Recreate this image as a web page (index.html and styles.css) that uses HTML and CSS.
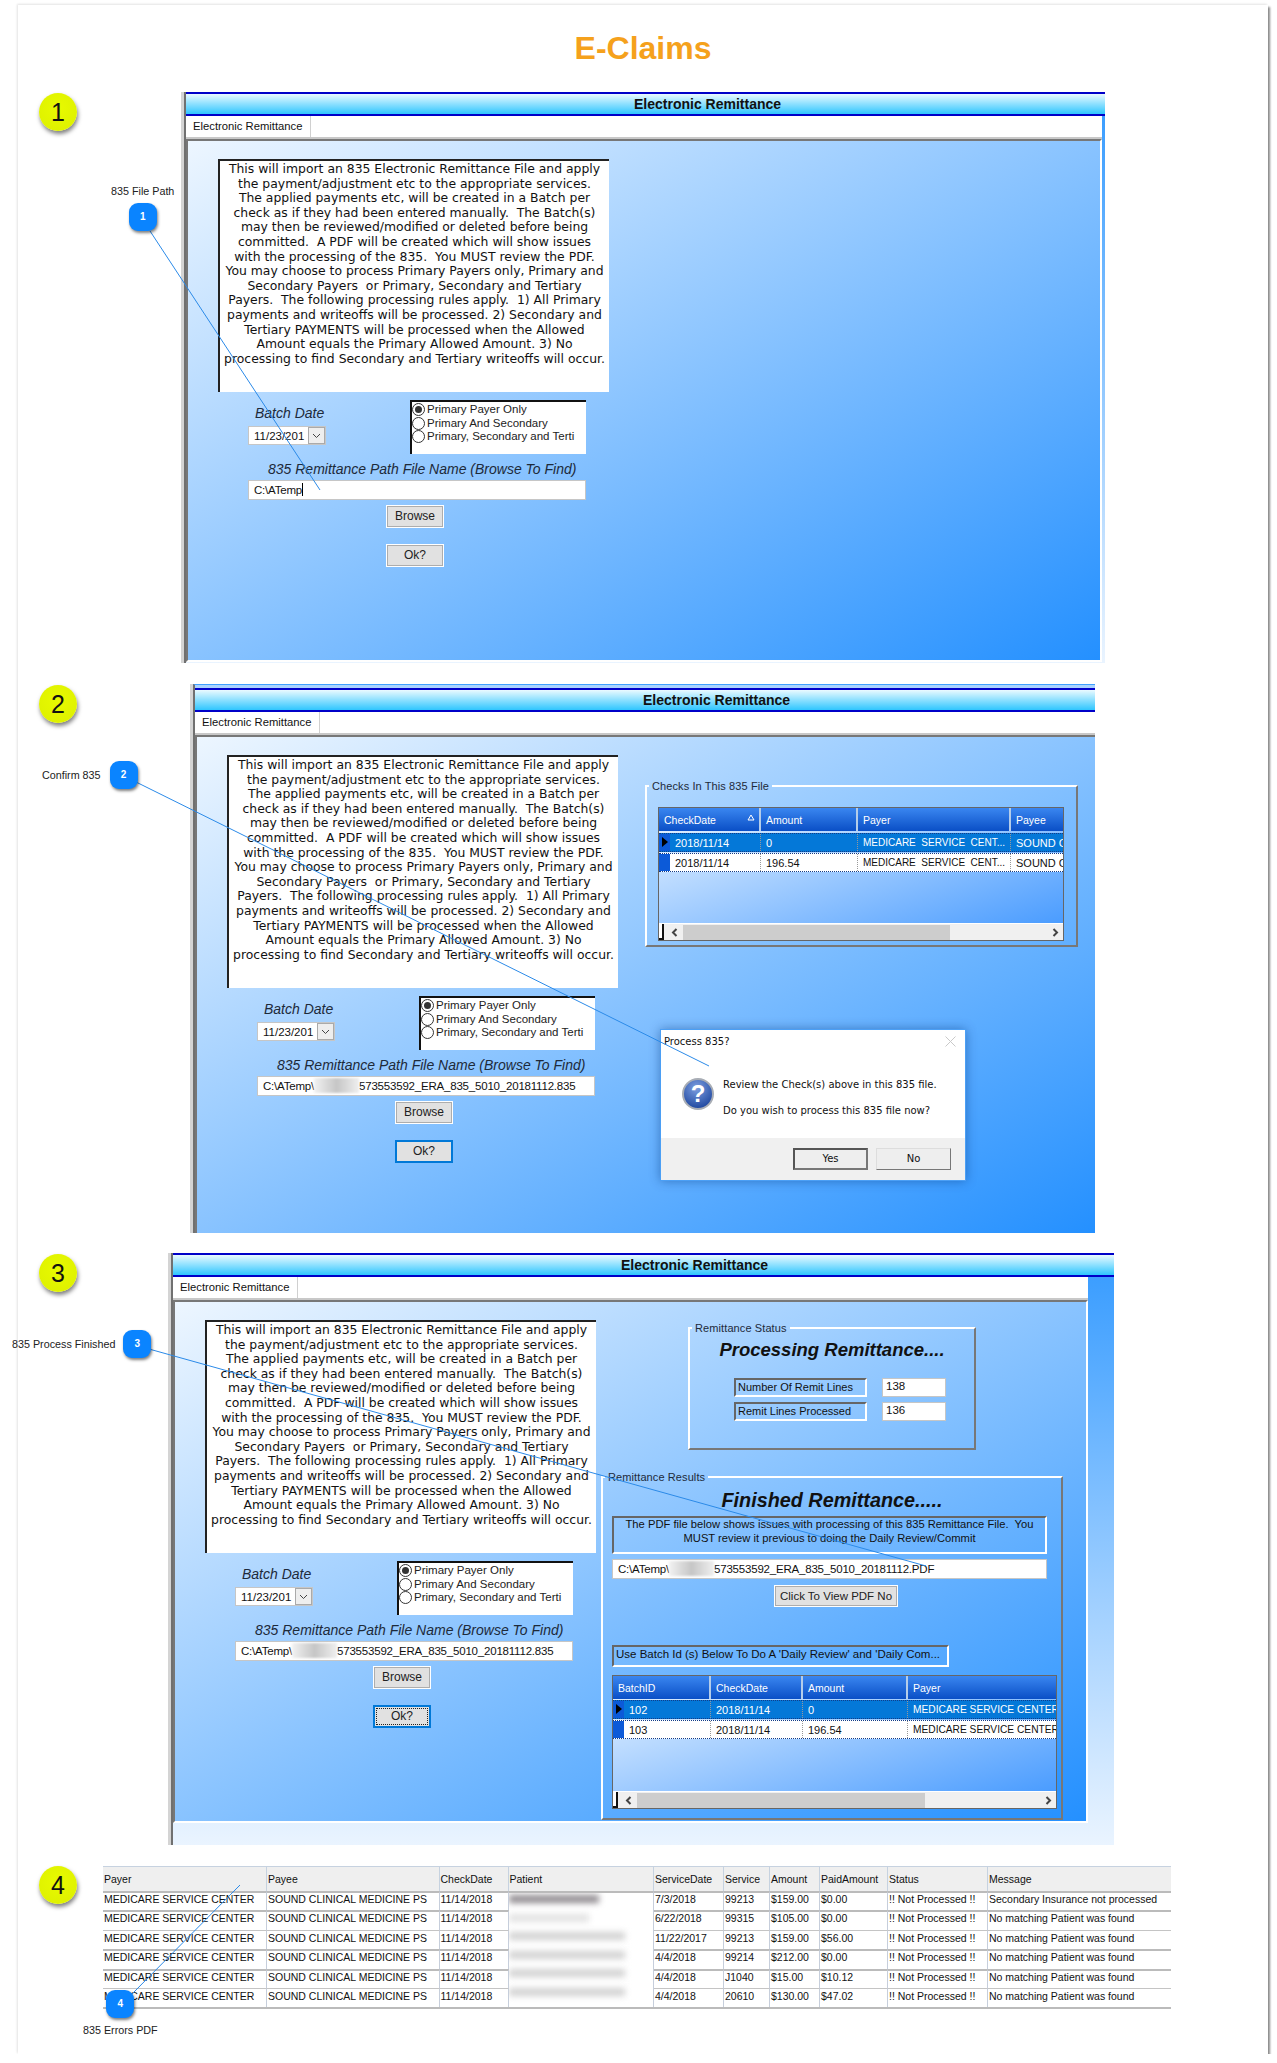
FILE: index.html
```html
<!DOCTYPE html>
<html lang="en">
<head>
  <meta charset="UTF-8" />
  <title>E-Claims</title>
  <link rel="stylesheet" href="styles.css">
</head>
<body>

<div class="card">
  <h1>E-Claims</h1>

  <!-- Step 1 -->
  <section class="step step-1">
    <div class="marker">1</div>
    <div class="win">
      <div class="win-title">Electronic Remittance</div>
      <div class="win-body">
        <div class="tabs"><span class="tab">Electronic Remittance</span></div>
        <div class="panel">
          <div class="form">
<div class="notice">This will import an 835 Electronic Remittance File and apply
the payment/adjustment etc to the appropriate services.
The applied payments etc, will be created in a Batch per
check as if they had been entered manually.  The Batch(s)
may then be reviewed/modified or deleted before being
committed.  A PDF will be created which will show issues
with the processing of the 835.  You MUST review the PDF.
You may choose to process Primary Payers only, Primary and
Secondary Payers  or Primary, Secondary and Tertiary
Payers.  The following processing rules apply.  1) All Primary
payments and writeoffs will be processed. 2) Secondary and
Tertiary PAYMENTS will be processed when the Allowed
Amount equals the Primary Allowed Amount. 3) No
processing to find Secondary and Tertiary writeoffs will occur.</div>
            <div class="form-lower">
              <div class="date-row">
                <div class="date-block">
                  <div class="date-label">Batch Date</div>
                  <div class="date-field">11/23/201<span class="drop"><svg width="9" height="6" viewBox="0 0 9 6"><path d="M1 1l3.5 3.5L8 1" fill="none" stroke="#444"/></svg></span></div>
                </div>
                <div class="radios">
                  <div class="radio on">Primary Payer Only</div>
                  <div class="radio">Primary And Secondary</div>
                  <div class="radio">Primary, Secondary and Terti</div>
                </div>
              </div>
              <div class="path-label">835 Remittance Path File Name (Browse To Find)</div>
              <div class="text-field">C:\ATemp<span class="caret"></span></div>
              <div class="btn">Browse</div>
              <div class="btn btn-ok">Ok?</div>
            </div>
          </div>
        </div>
      </div>
    </div>
    <div class="callout callout-col">
      <span class="callout-label">835 File Path</span>
      <span class="pin">1</span>
    </div>
  </section>

  <!-- Step 2 -->
  <section class="step step-2">
    <div class="marker">2</div>
    <div class="win">
      <div class="win-title">Electronic Remittance</div>
      <div class="win-body">
        <div class="tabs"><span class="tab">Electronic Remittance</span></div>
        <div class="panel">
          <div class="form">
<div class="notice">This will import an 835 Electronic Remittance File and apply
the payment/adjustment etc to the appropriate services.
The applied payments etc, will be created in a Batch per
check as if they had been entered manually.  The Batch(s)
may then be reviewed/modified or deleted before being
committed.  A PDF will be created which will show issues
with the processing of the 835.  You MUST review the PDF.
You may choose to process Primary Payers only, Primary and
Secondary Payers  or Primary, Secondary and Tertiary
Payers.  The following processing rules apply.  1) All Primary
payments and writeoffs will be processed. 2) Secondary and
Tertiary PAYMENTS will be processed when the Allowed
Amount equals the Primary Allowed Amount. 3) No
processing to find Secondary and Tertiary writeoffs will occur.</div>
            <div class="form-lower">
              <div class="date-row">
                <div class="date-block">
                  <div class="date-label">Batch Date</div>
                  <div class="date-field">11/23/201<span class="drop"><svg width="9" height="6" viewBox="0 0 9 6"><path d="M1 1l3.5 3.5L8 1" fill="none" stroke="#444"/></svg></span></div>
                </div>
                <div class="radios">
                  <div class="radio on">Primary Payer Only</div>
                  <div class="radio">Primary And Secondary</div>
                  <div class="radio">Primary, Secondary and Terti</div>
                </div>
              </div>
              <div class="path-label">835 Remittance Path File Name (Browse To Find)</div>
              <div class="text-field">C:\ATemp\<span class="smudge"></span>573553592_ERA_835_5010_20181112.835</div>
              <div class="btn">Browse</div>
              <div class="btn btn-ok btn-focus">Ok?</div>
            </div>
          </div>
          <div class="side">
            <fieldset class="group group-checks">
              <legend>Checks In This 835 File</legend>
              <div class="grid grid-checks">
                <div class="grid-row grid-head">
                  <span>CheckDate<svg class="sort" width="8" height="7" viewBox="0 0 8 7"><path d="M4 1L7 6H1z" fill="none" stroke="#fff"/></svg></span><span>Amount</span><span>Payer</span><span>Payee</span>
                </div>
                <div class="grid-row grid-sel">
                  <span><i class="mark mark-cur"></i>2018/11/14</span><span>0</span><span class="cut">MEDICARE  SERVICE  CENT...</span><span>SOUND C</span>
                </div>
                <div class="grid-row">
                  <span><i class="mark"></i>2018/11/14</span><span>196.54</span><span class="cut">MEDICARE  SERVICE  CENT...</span><span>SOUND C</span>
                </div>
                <div class="scroll">
                  <span class="sb-corner"></span>
                  <svg class="sb-arrow" width="7" height="9" viewBox="0 0 7 9"><path d="M5.5 1L2 4.5 5.5 8" fill="none" stroke="#444" stroke-width="2"/></svg>
                  <span class="sb-track"><span class="sb-thumb"></span></span>
                  <svg class="sb-arrow" width="7" height="9" viewBox="0 0 7 9"><path d="M1.5 1L5 4.5 1.5 8" fill="none" stroke="#444" stroke-width="2"/></svg>
                </div>
              </div>
            </fieldset>
          </div>
        </div>
      </div>
      <div class="dialog">
        <div class="dialog-head">Process 835?<svg class="dialog-x" width="11" height="11" viewBox="0 0 11 11"><path d="M.5.5l10 10M10.5.5l-10 10" stroke="#c9c9c9"/></svg></div>
        <div class="dialog-main">
          <svg class="dialog-icon" width="32" height="32" viewBox="0 0 32 32">
            <defs>
              <radialGradient id="qBlue" cx="45%" cy="30%" r="75%">
                <stop offset="0" stop-color="#7d9fe0"/>
                <stop offset="1" stop-color="#17409a"/>
              </radialGradient>
            </defs>
            <circle cx="16" cy="16" r="15" fill="url(#qBlue)" stroke="#a8adb5" stroke-width="2"/>
            <text x="16" y="24" text-anchor="middle" class="dialog-q">?</text>
          </svg>
          <div class="dialog-text">
            <p>Review the Check(s) above in this 835 file.</p>
            <p>Do you wish to process this 835 file now?</p>
          </div>
        </div>
        <div class="dialog-foot">
          <span class="dialog-btn dialog-btn-default">Yes</span>
          <span class="dialog-btn">No</span>
        </div>
      </div>
    </div>
    <div class="callout">
      <span class="callout-label">Confirm 835</span>
      <span class="pin">2</span>
    </div>
  </section>

  <!-- Step 3 -->
  <section class="step step-3">
    <div class="marker">3</div>
    <div class="win">
      <div class="win-title">Electronic Remittance</div>
      <div class="win-body">
        <div class="tabs"><span class="tab">Electronic Remittance</span></div>
        <div class="panel">
          <div class="form">
<div class="notice">This will import an 835 Electronic Remittance File and apply
the payment/adjustment etc to the appropriate services.
The applied payments etc, will be created in a Batch per
check as if they had been entered manually.  The Batch(s)
may then be reviewed/modified or deleted before being
committed.  A PDF will be created which will show issues
with the processing of the 835.  You MUST review the PDF.
You may choose to process Primary Payers only, Primary and
Secondary Payers  or Primary, Secondary and Tertiary
Payers.  The following processing rules apply.  1) All Primary
payments and writeoffs will be processed. 2) Secondary and
Tertiary PAYMENTS will be processed when the Allowed
Amount equals the Primary Allowed Amount. 3) No
processing to find Secondary and Tertiary writeoffs will occur.</div>
            <div class="form-lower">
              <div class="date-row">
                <div class="date-block">
                  <div class="date-label">Batch Date</div>
                  <div class="date-field">11/23/201<span class="drop"><svg width="9" height="6" viewBox="0 0 9 6"><path d="M1 1l3.5 3.5L8 1" fill="none" stroke="#444"/></svg></span></div>
                </div>
                <div class="radios">
                  <div class="radio on">Primary Payer Only</div>
                  <div class="radio">Primary And Secondary</div>
                  <div class="radio">Primary, Secondary and Terti</div>
                </div>
              </div>
              <div class="path-label">835 Remittance Path File Name (Browse To Find)</div>
              <div class="text-field">C:\ATemp\<span class="smudge"></span>573553592_ERA_835_5010_20181112.835</div>
              <div class="btn">Browse</div>
              <div class="btn btn-ok btn-focus"><span class="btn-dots">Ok?</span></div>
            </div>
          </div>
          <div class="side">
            <fieldset class="group group-status">
              <legend>Remittance Status</legend>
              <div class="big-title">Processing Remittance....</div>
              <div class="stat-row"><span class="sunken stat-label">Number Of Remit Lines</span><span class="stat-value">138</span></div>
              <div class="stat-row"><span class="sunken stat-label">Remit Lines Processed</span><span class="stat-value">136</span></div>
            </fieldset>
            <fieldset class="group group-results">
              <legend>Remittance Results</legend>
              <div class="big-title">Finished Remittance.....</div>
              <div class="sunken results-note">The PDF file below shows issues with processing of this 835 Remittance File.  You
MUST review it previous to doing the Daily Review/Commit</div>
              <div class="text-field results-path">C:\ATemp\<span class="smudge"></span>573553592_ERA_835_5010_20181112.PDF</div>
              <div class="btn btn-view">Click To View PDF No</div>
              <div class="sunken results-use">Use Batch Id (s) Below To Do A 'Daily Review' and 'Daily Com...</div>
              <div class="grid grid-batches">
                <div class="grid-row grid-head">
                  <span>BatchID</span><span>CheckDate</span><span>Amount</span><span>Payer</span>
                </div>
                <div class="grid-row grid-sel">
                  <span><i class="mark mark-cur"></i>102</span><span>2018/11/14</span><span>0</span><span class="cut">MEDICARE SERVICE CENTER</span>
                </div>
                <div class="grid-row">
                  <span><i class="mark"></i>103</span><span>2018/11/14</span><span>196.54</span><span class="cut">MEDICARE SERVICE CENTER</span>
                </div>
                <div class="scroll">
                  <span class="sb-corner"></span>
                  <svg class="sb-arrow" width="7" height="9" viewBox="0 0 7 9"><path d="M5.5 1L2 4.5 5.5 8" fill="none" stroke="#444" stroke-width="2"/></svg>
                  <span class="sb-track"><span class="sb-thumb"></span></span>
                  <svg class="sb-arrow" width="7" height="9" viewBox="0 0 7 9"><path d="M1.5 1L5 4.5 1.5 8" fill="none" stroke="#444" stroke-width="2"/></svg>
                </div>
              </div>
            </fieldset>
          </div>
        </div>
      </div>
    </div>
    <div class="callout">
      <span class="callout-label">835 Process Finished</span>
      <span class="pin">3</span>
    </div>
  </section>

  <!-- Step 4 -->
  <section class="step step-4">
    <div class="marker">4</div>
    <table class="errors">
      <colgroup>
        <col class="c-payer"><col class="c-payee"><col class="c-date"><col class="c-patient"><col class="c-svcdate"><col class="c-svc"><col class="c-amt"><col class="c-paid"><col class="c-status"><col class="c-msg">
      </colgroup>
      <thead>
        <tr><th>Payer</th><th>Payee</th><th>CheckDate</th><th>Patient</th><th>ServiceDate</th><th>Service</th><th>Amount</th><th>PaidAmount</th><th>Status</th><th>Message</th></tr>
      </thead>
      <tbody>
        <tr class="thick">
          <td>MEDICARE SERVICE CENTER</td><td>SOUND CLINICAL MEDICINE PS</td><td>11/14/2018</td>
          <td rowspan="6" class="patient">
            <div class="smear smear-dark"></div>
            <div class="smear smear-short"></div>
            <div class="smear"></div>
            <div class="smear"></div>
            <div class="smear"></div>
            <div class="smear"></div>
          </td>
          <td>7/3/2018</td><td>99213</td><td>$159.00</td><td>$0.00</td><td>!! Not Processed !!</td><td>Secondary Insurance not processed</td>
        </tr>
        <tr class="thick">
          <td>MEDICARE SERVICE CENTER</td><td>SOUND CLINICAL MEDICINE PS</td><td>11/14/2018</td>
          <td>6/22/2018</td><td>99315</td><td>$105.00</td><td>$0.00</td><td>!! Not Processed !!</td><td>No matching Patient was found</td>
        </tr>
        <tr>
          <td>MEDICARE SERVICE CENTER</td><td>SOUND CLINICAL MEDICINE PS</td><td>11/14/2018</td>
          <td>11/22/2017</td><td>99213</td><td>$159.00</td><td>$56.00</td><td>!! Not Processed !!</td><td>No matching Patient was found</td>
        </tr>
        <tr class="thick">
          <td>MEDICARE SERVICE CENTER</td><td>SOUND CLINICAL MEDICINE PS</td><td>11/14/2018</td>
          <td>4/4/2018</td><td>99214</td><td>$212.00</td><td>$0.00</td><td>!! Not Processed !!</td><td>No matching Patient was found</td>
        </tr>
        <tr class="thick">
          <td>MEDICARE SERVICE CENTER</td><td>SOUND CLINICAL MEDICINE PS</td><td>11/14/2018</td>
          <td>4/4/2018</td><td>J1040</td><td>$15.00</td><td>$10.12</td><td>!! Not Processed !!</td><td>No matching Patient was found</td>
        </tr>
        <tr>
          <td>MEDICARE SERVICE CENTER</td><td>SOUND CLINICAL MEDICINE PS</td><td>11/14/2018</td>
          <td>4/4/2018</td><td>20610</td><td>$130.00</td><td>$47.02</td><td>!! Not Processed !!</td><td>No matching Patient was found</td>
        </tr>
      </tbody>
    </table>
    <div class="callout callout-col">
      <span class="pin">4</span>
      <span class="callout-label">835 Errors PDF</span>
    </div>
  </section>

  <!-- leader lines from the pins to what they point at -->
  <svg class="leaders" width="1250" height="2049" viewBox="0 0 1250 2049">
    <line x1="132" y1="226" x2="302" y2="485"/>
    <line x1="118" y1="777" x2="691" y2="1061"/>
    <line x1="131" y1="1344" x2="908" y2="1561"/>
    <line x1="114" y1="1989" x2="222" y2="1880"/>
  </svg>
</div>

</body>
</html>
```

FILE: styles.css
```css
/* Colours shared by the form screenshots */
:root {
  --panel-light: #edf6ff;
  --panel-dark: #2490ff;
  --pin-blue: #0a84ff;
  --leader: #2b8ae8;
}

body {
  margin: 0;
  background: #fff;
  font-family: "Liberation Sans", Arial, sans-serif;
  color: #111;
}

.card {
  position: relative;
  width: 1250px;
  height: 2049px;
  margin: 5px 0 0 18px;
  background: #fff;
  box-shadow: 2px 2px 2px #8a8a8a, -1px -1px 2px #e4e4e4;
}

h1 {
  margin: 0;
  height: 87px;
  box-sizing: border-box;
  padding-top: 24px;
  font-size: 32px;
  line-height: 38px;
  text-align: center;
  color: #f5a11c;
}

/* One numbered step: yellow number, then window or table */
.step {
  position: relative;
  display: flex;
  align-items: flex-start;
}

.step-2 { margin-top: 21px; }
.step-3 { margin-top: 20px; }
.step-4 { margin-top: 20px; }

.marker {
  flex: none;
  width: 38px;
  height: 38px;
  margin: 1px 0 0 21px;
  border-radius: 50%;
  background: radial-gradient(circle at 50% 40%, #e8fa00, #dcef00);
  box-shadow: 1px 3px 4px rgba(0, 0, 0, 0.5);
  font-size: 25px;
  line-height: 38px;
  text-align: center;
  color: #111;
}

.step-1 .win { margin-left: 107px; width: 921px; }
.step-2 .win { margin-left: 116px; width: 902px; border-top: 1px solid #3fa0ff; padding-top: 3px; background: #a9d3ff; }
.step-3 .win { margin-left: 94px; width: 943px; }

/* Form window */
.win {
  position: relative;
  flex: none;
  box-sizing: border-box;
  border-left: 2px solid #707070;
  box-shadow: -3px 0 0 #d4d4d4;
  overflow: hidden;
}

.win-title {
  height: 24px;
  box-sizing: border-box;
  padding-left: 448px;
  border-top: 2px solid #0000c8;
  border-bottom: 2px solid #0000c8;
  background: linear-gradient(#eafaff, #2fc6ff);
  font-size: 14px;
  font-weight: bold;
  line-height: 20px;
  white-space: nowrap;
}

.win-body {
  background: linear-gradient(#3c9eff, #eaf4ff);
}

.step-1 .win-body { padding: 0 3px 1px 0; }
.step-3 .win-body { padding: 0 26px 22px 0; }

.tabs {
  height: 23px;
  box-sizing: border-box;
  border-bottom: 2px solid #c8c8c8;
  background: #fff;
}

.tab {
  display: inline-block;
  height: 21px;
  box-sizing: border-box;
  padding: 3px 8px 0 7px;
  border-right: 1px solid #d0d0d0;
  font-size: 11.25px;
  line-height: 14px;
}

.panel {
  display: flex;
  height: 523px;
  box-sizing: border-box;
  padding: 18px 0 0 30px;
  border: 2px solid;
  border-color: #777 #fff #fff #777;
  background: linear-gradient(to bottom right, var(--panel-light), var(--panel-dark));
}

.step-2 .panel { height: 498px; border-width: 2px 0 0 2px; }

/* Left column of the form */
.form {
  flex: none;
  width: 391px;
}

.notice {
  height: 233px;
  box-sizing: border-box;
  padding-top: 1px;
  border-top: 2px solid #222;
  border-left: 2px solid #222;
  background: #fff;
  font-family: "DejaVu Sans", Verdana, sans-serif;
  font-size: 12.4px;
  line-height: 14.6px;
  text-align: center;
  white-space: pre;
}

.form-lower {
  width: 338px;
  padding: 8px 0 0 30px;
}

.date-row {
  display: flex;
  justify-content: space-between;
}

.date-block { width: 78px; }

.date-label {
  height: 26px;
  padding: 6px 0 0 7px;
  box-sizing: border-box;
  font-size: 14px;
  font-style: italic;
  line-height: 15px;
  white-space: nowrap;
  color: #1d2a3a;
}

.date-field {
  display: flex;
  align-items: center;
  justify-content: space-between;
  height: 19px;
  box-sizing: border-box;
  padding-left: 5px;
  border: 1px solid #c6c6c6;
  background: #fff;
  font-size: 11.5px;
}

.drop {
  display: flex;
  align-items: center;
  justify-content: center;
  width: 17px;
  height: 17px;
  border: 1px solid #aaa;
  box-sizing: border-box;
  background: #eee;
}

.radios {
  width: 176px;
  height: 54px;
  box-sizing: border-box;
  padding-top: 1px;
  border-top: 2px solid #111;
  border-left: 2px solid #111;
  background: #fff;
}

.radio {
  position: relative;
  height: 13.5px;
  padding-left: 15px;
  font-size: 11.5px;
  line-height: 13.5px;
  white-space: nowrap;
  color: #222;
}

.radio::before {
  content: "";
  position: absolute;
  left: 0;
  top: 0;
  width: 11px;
  height: 11px;
  border: 1px solid #333;
  border-radius: 50%;
  background: #fff;
}

.radio.on::after {
  content: "";
  position: absolute;
  left: 3px;
  top: 3px;
  width: 7px;
  height: 7px;
  border-radius: 50%;
  background: #333;
}

.path-label {
  height: 26px;
  box-sizing: border-box;
  padding: 7px 0 0 20px;
  font-size: 14px;
  font-style: italic;
  line-height: 16px;
  white-space: nowrap;
  color: #1d2a3a;
}

.text-field {
  height: 20px;
  box-sizing: border-box;
  padding-left: 5px;
  border: 1px solid #c6c6c6;
  background: #fff;
  font-size: 11.5px;
  letter-spacing: -0.2px;
  line-height: 18px;
  white-space: nowrap;
}

.caret {
  display: inline-block;
  width: 1px;
  height: 13px;
  vertical-align: -2px;
  background: #000;
}

.smudge {
  display: inline-block;
  width: 45px;
  height: 15px;
  vertical-align: -3px;
  background: linear-gradient(90deg, #f2f2f2, #c6c6c6 50%, #efefef);
  filter: blur(1px);
}

.btn {
  width: 58px;
  height: 23px;
  box-sizing: border-box;
  margin: 5px auto 0 138px;
  border: 1px solid #fff;
  outline: 1px solid #adadad;
  outline-offset: -2px;
  background: #e1e1e1;
  font-size: 12px;
  line-height: 21px;
  text-align: center;
  color: #222;
}

.btn-ok { margin-top: 16px; }

.btn-focus {
  border: 2px solid #0078d7;
  outline: none;
  line-height: 19px;
}

.btn-dots {
  display: block;
  height: 15px;
  margin: 1px;
  border: 1px dotted #222;
  line-height: 15px;
}

/* Right column of the form */
.step-2 .side {
  margin: 24px 0 0 27px;
  width: 433px;
}

.step-3 .side {
  margin: 1px 0 0 5px;
  width: 462px;
}

.group {
  margin: 0;
  padding: 0;
  min-width: 0;
  box-sizing: border-box;
  border: 2px solid;
  border-color: #fff #777 #777 #fff;
}

.group legend {
  margin-left: 2px;
  padding: 0 3px;
  font-size: 11px;
  letter-spacing: 0.1px;
  line-height: 14px;
  color: #1d2a3a;
}

.group-checks { height: 168px; padding-top: 14px; }
.group-checks .grid { margin-left: 11px; width: 406px; }
.group-status { width: 288px; height: 129px; margin-left: 87px; }
.group-results { height: 350px; margin-top: 20px; }
.group-results > .sunken,
.group-results > .text-field,
.group-results > .grid { margin-left: 9px; }

.big-title {
  font-size: 18.5px;
  font-style: italic;
  font-weight: bold;
  line-height: 22px;
  text-align: center;
  white-space: nowrap;
}

.group-status .big-title { height: 39px; padding-top: 4px; }
.group-results .big-title {
  height: 27px;
  padding-top: 5px;
  font-size: 19.8px;
}

.sunken {
  box-sizing: border-box;
  border: 2px solid;
  border-color: #666 #fff #fff #666;
}

.stat-row {
  display: flex;
  align-items: flex-start;
  gap: 15px;
  height: 24px;
  padding-left: 44px;
}

.stat-label {
  width: 133px;
  height: 19px;
  padding-left: 2px;
  font-size: 11px;
  line-height: 15px;
  white-space: nowrap;
}

.stat-value {
  width: 64px;
  height: 19px;
  box-sizing: border-box;
  padding-left: 3px;
  border: 1px solid #c6c6c6;
  background: #fff;
  font-size: 11.5px;
  line-height: 15px;
}

.results-note {
  width: 435px;
  height: 38px;
  font-size: 11.2px;
  line-height: 13.5px;
  text-align: center;
  white-space: pre;
}

.results-path {
  width: 435px;
  margin-top: 5px;
}

.btn-view {
  width: 124px;
  height: 22px;
  margin: 6px 0 0 171px;
  line-height: 20px;
  font-size: 11.5px;
}

.results-use {
  width: 337px;
  height: 22px;
  margin-top: 38px;
  padding-left: 2px;
  font-size: 11.5px;
  line-height: 15px;
  white-space: nowrap;
}

/* Data grids */
.grid {
  display: flex;
  flex-direction: column;
  height: 134px;
  box-sizing: border-box;
  border: 1px solid #666;
  background: linear-gradient(to bottom right, var(--panel-light), #3f96ff);
  font-size: 11px;
  overflow: hidden;
}

.grid-batches { width: 445px; margin-top: 8px; }

.grid-row {
  display: grid;
  flex: none;
  height: 19px;
  margin-bottom: 1px;
  border-top: 1px dotted #123c88;
  border-bottom: 1px dotted #123c88;
  box-sizing: border-box;
  background: #fff;
  white-space: pre;
}

.grid-checks .grid-row { grid-template-columns: 102px 97px 153px 52px; }
.grid-batches .grid-row { grid-template-columns: 98px 92px 105px 150px; }

.grid-row > span {
  display: flex;
  align-items: center;
  padding-left: 5px;
  border-right: 1px dotted #999;
  overflow: hidden;
}

.grid-row > span:last-child { border-right: none; }

.grid-row > .cut { font-size: 10.2px; }
.grid-checks .grid-row > .cut { font-size: 10px; }

.grid-head {
  height: 23px;
  margin-bottom: 2px;
  border: none;
  background: #cfe0f5;
  color: #fff;
  font-size: 10.5px;
}

.grid-batches .grid-head { margin-bottom: 1px; }

.grid-head > span {
  position: relative;
  border-right: 2px solid #b4cdea;
  background: linear-gradient(#3a86f0, #0a4fc6);
}

.grid-sel {
  background: #0478d8;
  color: #fff;
}

.sort {
  position: absolute;
  right: 4px;
  top: 6px;
}

.grid-row > span:first-child {
  padding-left: 0;
}

.grid-head > span:first-child { padding-left: 5px; }

.mark {
  position: relative;
  flex: none;
  width: 11px;
  height: 17px;
  margin-right: 5px;
  background: #0c5ad8;
}

.mark-cur::after {
  content: "";
  position: absolute;
  left: 3px;
  top: 3px;
  border-left: 6px solid #000;
  border-top: 5px solid transparent;
  border-bottom: 5px solid transparent;
}

.scroll {
  display: flex;
  align-items: center;
  gap: 3px;
  height: 17px;
  margin-top: auto;
  border-top: 1px solid #fff;
  box-sizing: border-box;
  background: #f0f0f0;
}

.sb-corner {
  flex: none;
  width: 5px;
  height: 16px;
  border-right: 2px solid #111;
  border-bottom: 2px solid #111;
  box-sizing: border-box;
  background: #fff;
}

.sb-arrow { flex: none; margin: 0 4px; }

.sb-track {
  flex: 1;
  height: 15px;
}

.sb-thumb {
  display: block;
  height: 100%;
  width: 267px;
  margin-left: -2px;
  background: #cdcdcd;
}

.grid-batches .sb-thumb { width: 288px; }

/* Message box over window 2 */
.dialog {
  position: absolute;
  left: 465px;
  top: 344px;
  display: flex;
  flex-direction: column;
  width: 306px;
  height: 152px;
  box-sizing: border-box;
  border: 1px solid #4b9ff5;
  background: #fff;
  box-shadow: 0 0 10px rgba(0, 50, 120, 0.45);
  font-family: "DejaVu Sans", Tahoma, sans-serif;
  font-size: 10px;
}

.dialog-head {
  position: relative;
  height: 43px;
  padding: 5px 0 0 3px;
  box-sizing: border-box;
  font-size: 10px;
  line-height: 14px;
}

.dialog-x {
  position: absolute;
  right: 9px;
  top: 6px;
}

.dialog-main {
  display: flex;
  gap: 9px;
  flex: 1;
  padding-left: 21px;
}

.dialog-icon { margin-top: 5px; }

.dialog-q {
  font-family: "Liberation Sans", Arial, sans-serif;
  font-size: 24px;
  font-weight: bold;
  fill: #fff;
}

.dialog-text p {
  margin: 5px 0 13px;
  line-height: 13px;
  white-space: nowrap;
}

.dialog-foot {
  display: flex;
  justify-content: flex-end;
  gap: 8px;
  height: 42px;
  box-sizing: border-box;
  padding: 10px 14px 0 0;
  background: #f0f0f0;
}

.dialog-btn {
  width: 75px;
  height: 22px;
  box-sizing: border-box;
  border: 1px solid;
  border-color: #ddd #777 #777 #ddd;
  background: #eee;
  line-height: 20px;
  text-align: center;
}

.dialog-btn-default {
  border: 2px solid #666;
  border-color: #555 #777 #777 #555;
  line-height: 18px;
}

/* PDF error table */
.errors {
  flex: none;
  width: 1068px;
  margin: 1px 0 0 26px;
  border-collapse: separate;
  border-spacing: 0;
  table-layout: fixed;
  border-bottom: 2px solid #bbb;
  font-size: 10.5px;
}

.c-payer { width: 164px; }
.c-payee { width: 172.5px; }
.c-date { width: 69px; }
.c-patient { width: 145.5px; }
.c-svcdate { width: 70px; }
.c-svc { width: 46px; }
.c-amt { width: 50px; }
.c-paid { width: 68px; }
.c-status { width: 100px; }
.c-msg { width: 183px; }

.errors th {
  height: 25px;
  box-sizing: border-box;
  padding: 0 0 0 1px;
  border-top: 1px solid #c6d2e0;
  border-right: 1px solid #c6d2e0;
  border-left: none;
  background: #efefef;
  font-weight: normal;
  text-align: left;
}

.errors th:last-child { border-right: none; }

.errors td {
  height: 19.4px;
  box-sizing: border-box;
  padding: 1px 0 0 1px;
  border-top: 1px solid #c4c4c4;
  border-right: 1px solid #c6cedb;
  line-height: 12px;
  vertical-align: top;
  white-space: nowrap;
  overflow: hidden;
}

.errors .thick td {
  padding-top: 0;
  border-top: 2px solid #bbb;
}

.errors td:last-child { border-right: none; }

.errors .patient {
  border-top: 2px solid #bbb;
  background: #fff;
}

.errors td.patient { padding: 2px 0 0 0; }

.smear {
  width: 116px;
  height: 8px;
  margin-bottom: 10.5px;
  background: #d2d2d2;
  filter: blur(3px);
}

.smear-dark { width: 90px; background: #8f8a8f; }
.smear-short { width: 80px; background: #e2e2e2; }

/* Pins and their captions */
.callout {
  position: absolute;
  z-index: 3;
  display: flex;
  align-items: center;
  white-space: nowrap;
}

.callout-col { flex-direction: column; gap: 6px; }

.step-1 .callout { left: 93px; top: 93px; }
.step-2 .callout { left: 24px; top: 77px; gap: 9px; }
.step-3 .callout { left: -6px; top: 77px; gap: 8px; }
.step-4 .callout { left: 65px; top: 125px; }

.callout-label {
  font-size: 10.75px;
  line-height: 12px;
  color: #222;
}

.pin {
  width: 28px;
  height: 28px;
  border-radius: 9px;
  background: var(--pin-blue);
  box-shadow: 1px 2px 3px rgba(0, 0, 0, 0.5);
  font-size: 10px;
  font-weight: bold;
  line-height: 28px;
  text-align: center;
  color: #fff;
}

.leaders {
  position: absolute;
  left: 0;
  top: 0;
  z-index: 2;
  pointer-events: none;
}

.leaders line {
  stroke: var(--leader);
  stroke-width: 1;
}
```
